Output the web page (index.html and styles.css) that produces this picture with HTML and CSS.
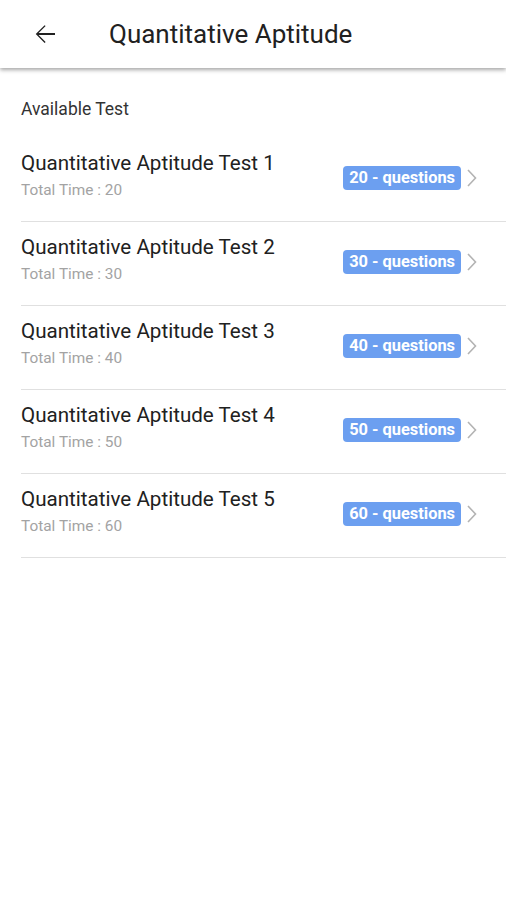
FILE: index.html
```html
<!DOCTYPE html>
<html lang="en">

<head>
    <meta charset="UTF-8">
    <meta name="viewport" content="width=device-width, initial-scale=1.0">
    <link rel="stylesheet" href="styles.css">
    <title>Quantitative Aptitude</title>
</head>

<body>
    <div class="app-bar">
        <a href="javascript:;" class="back">
            <svg width="30" height="30" viewBox="0 0 24 24">
                <path d="M20 11.25H6.9l5.6-5.6L11.7 4.9 4.6 12l7.1 7.1.8-.75-5.6-5.6H20v-1.5z" fill="#212121" />
            </svg>
        </a>
        <h1 class="title">Quantitative Aptitude</h1>
    </div>

    <div class="content">
        <p class="section">Available Test</p>
        <ul class="tests">
            <li class="test">
                <div class="test-info">
                    <div class="test-name">Quantitative Aptitude Test 1</div>
                    <div class="test-time">Total Time : 20</div>
                </div>
                <span class="badge">20 - questions</span>
                <svg class="chevron" width="16" height="24" viewBox="0 0 16 24">
                    <path d="M4 4l7.5 8L4 20" fill="none" stroke="#b3b3b3" stroke-width="1.6" />
                </svg>
            </li>
            <li class="test">
                <div class="test-info">
                    <div class="test-name">Quantitative Aptitude Test 2</div>
                    <div class="test-time">Total Time : 30</div>
                </div>
                <span class="badge">30 - questions</span>
                <svg class="chevron" width="16" height="24" viewBox="0 0 16 24">
                    <path d="M4 4l7.5 8L4 20" fill="none" stroke="#b3b3b3" stroke-width="1.6" />
                </svg>
            </li>
            <li class="test">
                <div class="test-info">
                    <div class="test-name">Quantitative Aptitude Test 3</div>
                    <div class="test-time">Total Time : 40</div>
                </div>
                <span class="badge">40 - questions</span>
                <svg class="chevron" width="16" height="24" viewBox="0 0 16 24">
                    <path d="M4 4l7.5 8L4 20" fill="none" stroke="#b3b3b3" stroke-width="1.6" />
                </svg>
            </li>
            <li class="test">
                <div class="test-info">
                    <div class="test-name">Quantitative Aptitude Test 4</div>
                    <div class="test-time">Total Time : 50</div>
                </div>
                <span class="badge">50 - questions</span>
                <svg class="chevron" width="16" height="24" viewBox="0 0 16 24">
                    <path d="M4 4l7.5 8L4 20" fill="none" stroke="#b3b3b3" stroke-width="1.6" />
                </svg>
            </li>
            <li class="test">
                <div class="test-info">
                    <div class="test-name">Quantitative Aptitude Test 5</div>
                    <div class="test-time">Total Time : 60</div>
                </div>
                <span class="badge">60 - questions</span>
                <svg class="chevron" width="16" height="24" viewBox="0 0 16 24">
                    <path d="M4 4l7.5 8L4 20" fill="none" stroke="#b3b3b3" stroke-width="1.6" />
                </svg>
            </li>
        </ul>
    </div>
</body>

</html>
```

FILE: styles.css
```css
body {
    margin: 0;
    background-color: #fff;
    font-family: Roboto, "Noto Sans", sans-serif;
    color: #212121;
}

a {
    text-decoration: none;
}

.app-bar {
    display: flex;
    align-items: center;
    height: 68px;
    padding-left: 30px;
    background-color: #fff;
    box-shadow: 0 2px 4px rgba(0, 0, 0, .35);
}

.back {
    display: flex;
    width: 30px;
    height: 30px;
}

.title {
    margin: 0 0 0 49px;
    font-size: 26px;
    font-weight: 400;
    color: #212121;
}

.content {
    padding: 31px 0 0 21px;
}

.section {
    margin: 0 0 19px;
    font-size: 17.5px;
    line-height: 20px;
    color: #333;
}

.tests {
    margin: 0;
    padding: 0;
    list-style: none;
}

.test {
    display: flex;
    align-items: center;
    padding: 13px 26px 21px 0;
    border-bottom: 1px solid #e0e0e0;
}

.test-info {
    flex: 1;
}

.test-name {
    font-size: 20.6px;
    line-height: 25px;
    color: #212121;
}

.test-time {
    margin-top: 4px;
    font-size: 15.4px;
    line-height: 20px;
    color: #a3a3a3;
}

.badge {
    margin-top: 5px;
    padding: 2px 6px;
    border-radius: 4px;
    background-color: #6c9ff0;
    color: #fff;
    font-size: 16.4px;
    font-weight: 700;
    line-height: 20px;
}

.chevron {
    margin: 5px 0 0 3px;
}
```
